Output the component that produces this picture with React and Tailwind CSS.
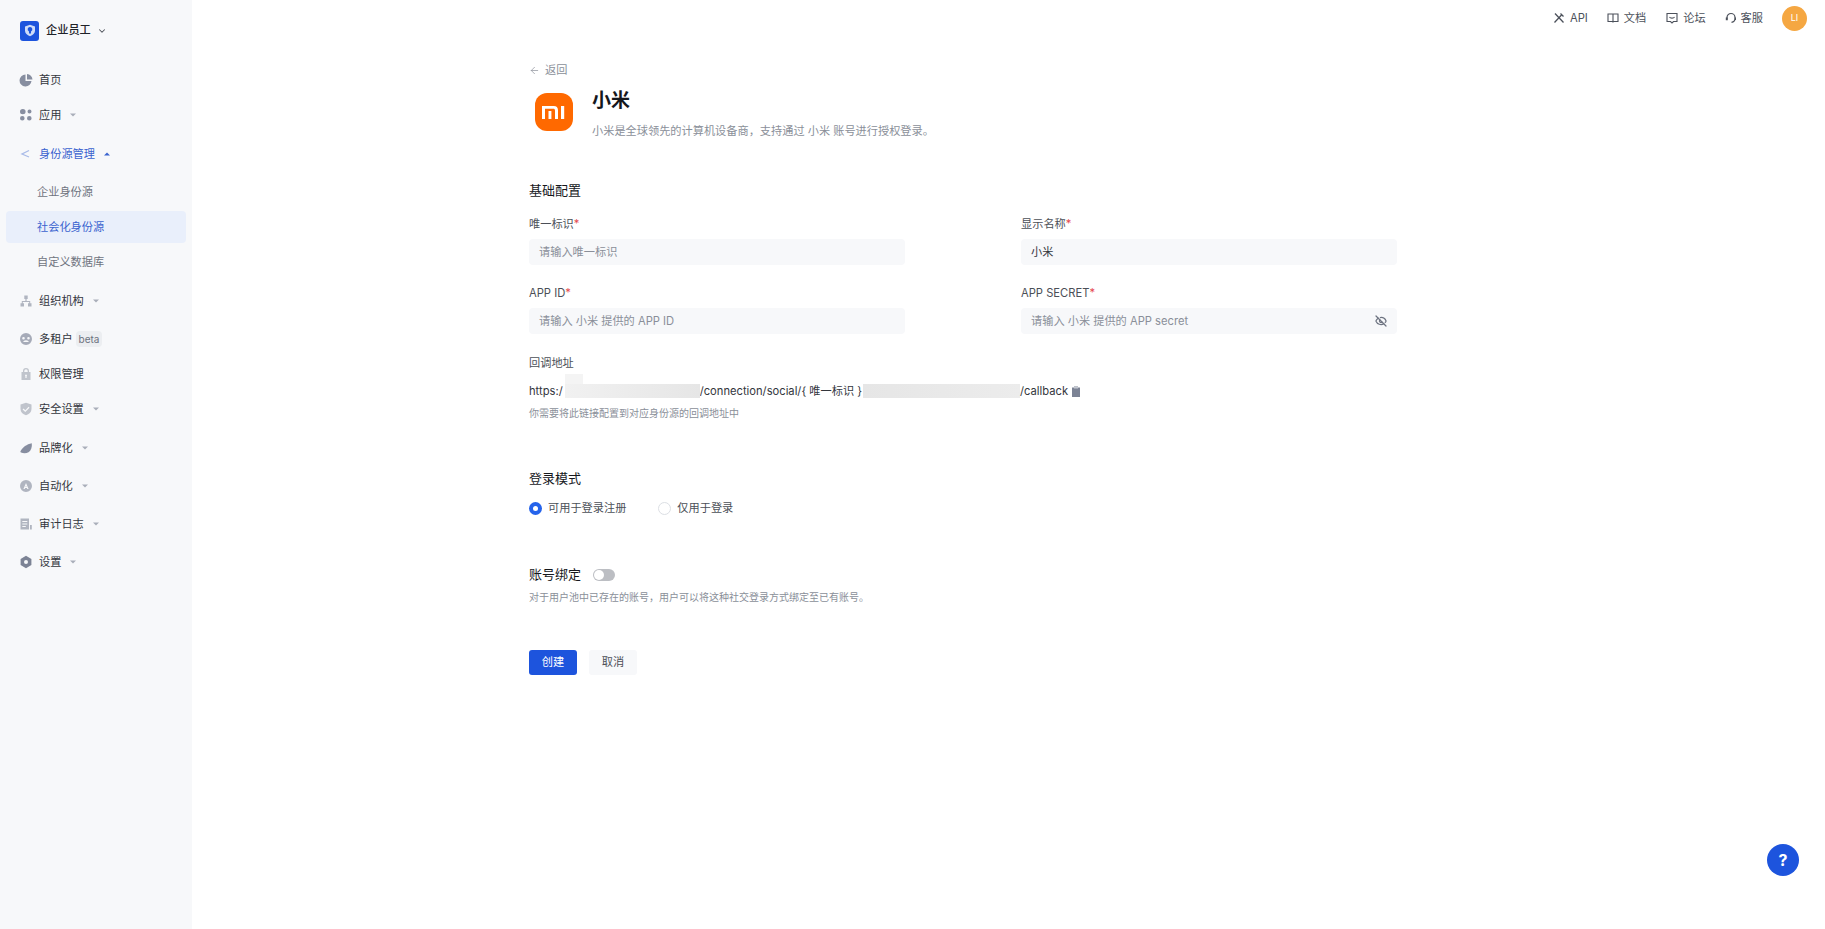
import React from 'react';
import { ArrowLeft, ChevronDown, EyeOff } from 'lucide-react';

const Caret = ({ up, className = 'text-[#a9aeb9]' }) => (
  <svg width="6" height="4" viewBox="0 0 6 4" className={className}>
    <path d={up ? 'M3 0.500 6 3.500H0z' : 'M0 .5h6L3 3.500z'} fill="currentColor" />
  </svg>
);

// sidebar glyphs, roughly what the product uses
const icons = {
  home: { color: 'text-[#878ea0]', d: <path d="M6.500 1.500a6 6 0 1 0 6 6.500H6.500zM8 1v5.500h5.500A5.800 5.800 0 0 0 8 1z" /> },
  apps: { color: 'text-[#878ea0]', d: <path d="M1 3.800a2.800 2.800 0 0 1 5.600 0C6.600 5.500 5.500 6.300 3.800 6.300 2 6.300 1 5.500 1 3.800zM8.500 3.500a2 2 0 1 1 4 0 2 2 0 0 1-4 0zM1 10.200a2.300 2.300 0 1 1 4.600 0 2.300 2.300 0 0 1-4.600 0zM8 10.200a2.300 2.300 0 1 1 4.600 0 2.300 2.300 0 0 1-4.600 0z" /> },
  org: { color: 'text-[#b0b5c0]', d: <path d="M5.300 1.500h3.400v3.400H7.600v2h3.600v2.300h1.300v3.300H9v-3.300h1.200V8H3.800v1.200H5v3.300H1.500v-3.300h1.300V6.900h3.600v-2H5.300z" /> },
  tenant: { color: 'text-[#a6abb8]', d: <path d="M7 1a6 6 0 1 0 0 12A6 6 0 0 0 7 1zM4.500 5a1.300 1.300 0 1 1 0 2.600 1.300 1.300 0 0 1 0-2.600zm5 0a1.300 1.300 0 1 1 0 2.600 1.300 1.300 0 0 1 0-2.600zM7 8.200c1.500 0 2.500.8 2.800 1.800H4.200C4.500 9 5.500 8.200 7 8.200z" /> },
  lock: { color: 'text-[#c0c4cc]', d: <path fillRule="evenodd" d="M4 5V4a3 3 0 0 1 6 0v1h1.500v8h-9V5zm1.300 0h3.400V4a1.700 1.700 0 0 0-3.400 0zM7 7.500a1 1 0 0 0-.6 1.800V11h1.200V9.300A1 1 0 0 0 7 7.500z" /> },
  shield: { color: 'text-[#c0c4cc]', d: <path fillRule="evenodd" d="M7 .8 12.500 2.500V7c0 3.200-2.300 5.200-5.500 6.300C3.800 12.200 1.500 10.200 1.500 7V2.500zM4.500 6.500l-.9.9L6.300 10l4.200-4.300-.9-.9-3.300 3.400z" /> },
  brand: { color: 'text-[#878ea0]', d: <path d="M12.800 2.200c.4 3.600-.6 7.400-3.300 9-2.200 1.300-5.300 1.200-7.500.2-.6-.3-.8-.8-.4-1.400C3.500 6.300 7.800 3.100 12.800 2.200z" /> },
  auto: { color: 'text-[#b0b5c0]', d: <path fillRule="evenodd" d="M7 1a6 6 0 1 0 0 12A6 6 0 0 0 7 1zm0 3 2.600 6H8.300l-.4-1H6.100l-.4 1H4.400zm0 2.800-.5 1.200h1z" /> },
  audit: { color: 'text-[#b0b5c0]', d: <path d="M1.500 1.500h8.500v11H1.500zM3.300 4v1.100h5V4zm0 2.500v1.100h5V6.500zm0 2.500v1.100h3.500V9zM11 8h1.800v4.500H11z" /> },
  settings: { color: 'text-[#7c8395]', d: <path fillRule="evenodd" d="m7 .8 5.400 3.100v6.200L7 13.200 1.600 10.100V3.900zM7 5a2 2 0 1 0 0 4 2 2 0 0 0 0-4z" /> },
};

const NavIcon = ({ name }) => (
  <svg width="14" height="14" viewBox="0 0 14 14" fill="currentColor" className={`shrink-0 ${icons[name].color}`}>
    {icons[name].d}
  </svg>
);

const NavItem = ({ icon, label, caret, badge, className = '' }) => (
  <div className={`flex items-center h-[20px] pl-[19px] ${className}`}>
    <NavIcon name={icon} />
    <span className="ml-[6px] text-[#33363d]">{label}</span>
    {badge && <span className="ml-[3px] px-[3px] h-[16px] leading-[16px] rounded-sm bg-[#eceef1] text-[#6d7380] text-[10px]">{badge}</span>}
    {caret && <span className="ml-[9px] flex"><Caret /></span>}
  </div>
);

const Sidebar = () => (
  <aside className="w-[192px] shrink-0 bg-[#f7f8fa] min-h-screen text-[11.2px]">
    <div className="flex items-center pl-[20px] pt-[11px] h-[50px]">
      <div className="w-[19px] h-[20px] rounded-[3px] bg-[#1d54dd] flex items-center justify-center">
        <svg width="12" height="13" viewBox="0 0 12 13">
          <path d="M6 .8 11 2.400V6.500c0 2.900-2.100 4.700-5 5.700-2.900-1-5-2.800-5-5.700V2.400z" fill="#cfdcf8" />
          <path d="M6 3a2.300 2.300 0 0 0-1 4.400V9.500h2V7.400A2.300 2.300 0 0 0 6 3z" fill="#1d54dd" />
        </svg>
      </div>
      <span className="ml-[7px] text-[#1f2228] font-medium">企业员工</span>
      <ChevronDown size={10} strokeWidth={2.5} className="ml-[6px] text-[#4b5058]" />
    </div>
    <NavItem icon="home" label="首页" className="mt-[20px]" />
    <NavItem icon="apps" label="应用" caret className="mt-[15px]" />
    <div className="flex items-center h-[20px] pl-[19px] mt-[19px] text-[#3a63cf]">
      <svg width="14" height="14" viewBox="0 0 14 14" fill="none" stroke="#a9bbe8" strokeWidth="1.300" className="shrink-0">
        <path d="M10 3.500 3 7l7 3" />
      </svg>
      <span className="ml-[6px]">身份源管理</span>
      <span className="ml-[9px] flex"><Caret up className="text-[#3a63cf]" /></span>
    </div>
    <div className="flex items-center h-[20px] pl-[37px] mt-[18px] text-[#6f7480]">企业身份源</div>
    <div className="flex items-center h-[32px] mx-[6px] pl-[31px] mt-[9px] rounded-sm bg-[#e9effb] text-[#3a63cf]">社会化身份源</div>
    <div className="flex items-center h-[20px] pl-[37px] mt-[9px] text-[#6f7480]">自定义数据库</div>
    <NavItem icon="org" label="组织机构" caret className="mt-[19px]" />
    <NavItem icon="tenant" label="多租户" badge="beta" className="mt-[18px]" />
    <NavItem icon="lock" label="权限管理" className="mt-[15px]" />
    <NavItem icon="shield" label="安全设置" caret className="mt-[15px]" />
    <NavItem icon="brand" label="品牌化" caret className="mt-[19px]" />
    <NavItem icon="auto" label="自动化" caret className="mt-[18px]" />
    <NavItem icon="audit" label="审计日志" caret className="mt-[18px]" />
    <NavItem icon="settings" label="设置" caret className="mt-[18px]" />
  </aside>
);

const TopBar = () => (
  <header className="flex items-center justify-end h-[36px] pr-[18px] text-[11.2px] text-[#4c515b]">
    <div className="flex items-center">
      <svg width="12" height="12" viewBox="0 0 12 12" fill="none" stroke="#4c515b" strokeWidth="1.300">
        <path d="M1.500 10.500 8.500 3M2 1.500l8.500 9M7.500 1.500l3 3" />
      </svg>
      <span className="ml-[5px]">API</span>
    </div>
    <div className="flex items-center ml-[19px]">
      <svg width="12" height="12" viewBox="0 0 12 12" fill="none" stroke="#4c515b" strokeWidth="1.100">
        <path d="M1 2h10v7.500H6.500l-.5.5-.5-.5H1zM6 2v8" />
      </svg>
      <span className="ml-[5px]">文档</span>
    </div>
    <div className="flex items-center ml-[20px]">
      <svg width="12" height="12" viewBox="0 0 12 12" fill="none" stroke="#4c515b" strokeWidth="1.100">
        <path d="M1 1.500h10v8H7.500L6 11 4.500 9.500H1zM3.500 5c.8 1.500 4.200 1.500 5 0" />
      </svg>
      <span className="ml-[5px]">论坛</span>
    </div>
    <div className="flex items-center ml-[19px]">
      <svg width="12" height="12" viewBox="0 0 12 12" fill="none" stroke="#4c515b" strokeWidth="1.200">
        <path d="M2 6.500V5.500a4 4 0 0 1 8 0v1c0 2-1.300 3.500-3.500 3.800" />
        <path d="M.8 5.500h2v2.800h-2zM9.800 5.500h1.200v2.400H9.800z" fill="#4c515b" stroke="none" />
      </svg>
      <span className="ml-[4px]">客服</span>
    </div>
    <div className="ml-[19px] w-[25px] h-[25px] rounded-full bg-[#f5a742] flex items-center justify-center text-white text-[9px]">LI</div>
  </header>
);

const Field = ({ label, placeholder, value, right }) => (
  <div className="w-[376px]">
    <div className="h-[16px] leading-[16px] text-[#4b4f57]">
      {label}<span className="text-[#e5484d]">*</span>
    </div>
    <div className="mt-[7px] h-[26px] rounded-sm bg-[#f7f8fa] flex items-center justify-between px-[10px]">
      {value ? <span className="text-[#33363d]">{value}</span> : <span className="text-[#8a8f99]">{placeholder}</span>}
      {right}
    </div>
  </div>
);

const Radio = ({ checked, label }) => (
  <div className="flex items-center">
    {checked ? (
      <span className="w-[13px] h-[13px] rounded-full bg-[#2563eb] flex items-center justify-center">
        <span className="w-[5px] h-[5px] rounded-full bg-white" />
      </span>
    ) : (
      <span className="w-[13px] h-[13px] rounded-full border border-[#dcdfe4] bg-white" />
    )}
    <span className="ml-[6px] text-[#4b4f57]">{label}</span>
  </div>
);

const Form = () => (
  <div className="ml-[337px] w-[868px] text-[11.2px]">
    <div className="flex items-center h-[16px] mt-[26px] text-[#8a8f99]">
      <ArrowLeft size={11} strokeWidth={1.5} />
      <span className="ml-[5px]">返回</span>
    </div>
    <div className="flex mt-[4px] ml-[6px]">
      <svg width="38" height="38" viewBox="0 0 38 38" className="mt-[11px] shrink-0">
        <rect width="38" height="38" rx="12" fill="#ff6900" />
        <path d="M7 13h11.800c2.700 0 4.200 1.500 4.200 4.200V26h-3v-8.500c0-1.200-.6-1.800-1.800-1.800H10V26H7zM13.500 18h2.900v8h-2.900zM26 13h3.200v13H26z" fill="#fff" />
      </svg>
      <div className="ml-[19px]">
        <div className="mt-[5px] text-[19px] leading-[28px] font-bold text-[#15171c]">小米</div>
        <div className="mt-[8px] leading-[16px] text-[#8a8f99]">小米是全球领先的计算机设备商，支持通过 小米 账号进行授权登录。</div>
      </div>
    </div>
    <div className="mt-[42px] text-[13px] leading-[18px] text-[#15171c]">基础配置</div>
    <div className="mt-[17px] grid grid-cols-[376px_376px] justify-between gap-y-[20px] w-[868px]">
      <Field label="唯一标识" placeholder="请输入唯一标识" />
      <Field label="显示名称" value="小米" />
      <Field label="APP ID" placeholder="请输入 小米 提供的 APP ID" />
      <Field
        label="APP SECRET"
        placeholder="请输入 小米 提供的 APP secret"
        right={<EyeOff size={12} strokeWidth={2.5} className="text-[#6d7380]" />}
      />
    </div>
    <div className="mt-[21px] h-[16px] leading-[16px] text-[#4b4f57]">回调地址</div>
    <div className="mt-[12px] flex items-center h-[16px] text-[#33363d] whitespace-nowrap">
      <span className="pr-[2px]">https:/</span>
      <span className="relative w-[135px] h-[14px] shrink-0 bg-gradient-to-r from-[#f1f1f1] to-[#e6e6e6]">
        <span className="absolute left-0 bottom-full w-[18px] h-[10px] bg-[#f4f4f4]" />
      </span>
      <span>/connection/social/{'{'} 唯一标识 {'}'}</span>
      <span className="ml-[1px] w-[157px] h-[14px] shrink-0 bg-gradient-to-r from-[#e6e6e6] to-[#ececec]" />
      <span>/callback</span>
      <svg width="10" height="11" viewBox="0 0 10 11" className="ml-[3px]">
        <path d="M3 1.500V.5h4v1h2V11H1V1.500z" fill="#7c8395" />
        <path d="M3 1h4v1.500H3z" fill="#c4c8d0" />
      </svg>
    </div>
    <div className="mt-[7px] h-[14px] leading-[14px] text-[10px] text-[#8a8f99]">你需要将此链接配置到对应身份源的回调地址中</div>
    <div className="mt-[49px] text-[13px] leading-[18px] text-[#15171c]">登录模式</div>
    <div className="mt-[13px] flex items-center gap-[32px] h-[16px]">
      <Radio checked label="可用于登录注册" />
      <Radio label="仅用于登录" />
    </div>
    <div className="mt-[50px] flex items-center h-[18px]">
      <span className="text-[13px] text-[#15171c]">账号绑定</span>
      <span className="ml-[12px] w-[22px] h-[12px] rounded-full bg-[#bcbec3] flex items-center pl-[1px]">
        <span className="w-[10px] h-[10px] rounded-full bg-white" />
      </span>
    </div>
    <div className="mt-[6px] h-[14px] leading-[14px] text-[10px] text-[#8a8f99]">对于用户池中已存在的账号，用户可以将这种社交登录方式绑定至已有账号。</div>
    <div className="mt-[46px] flex gap-[12px]">
      <div className="w-[48px] h-[25px] rounded-[3px] bg-[#1d54dd] text-white flex items-center justify-center">创建</div>
      <div className="w-[48px] h-[25px] rounded-[3px] bg-[#f7f8fa] text-[#4b4f57] flex items-center justify-center">取消</div>
    </div>
  </div>
);

export default function App() {
  return (
    <div className="relative flex min-h-screen bg-white font-['Inter','Noto_Sans_CJK_SC',sans-serif]">
      <Sidebar />
      <main className="flex-1 min-w-0">
        <TopBar />
        <Form />
      </main>
      <div className="fixed right-[26px] bottom-[53px] w-[32px] h-[32px] rounded-full bg-[#1d54dd] flex items-center justify-center text-white text-[16px] font-bold">?</div>
    </div>
  );
}
